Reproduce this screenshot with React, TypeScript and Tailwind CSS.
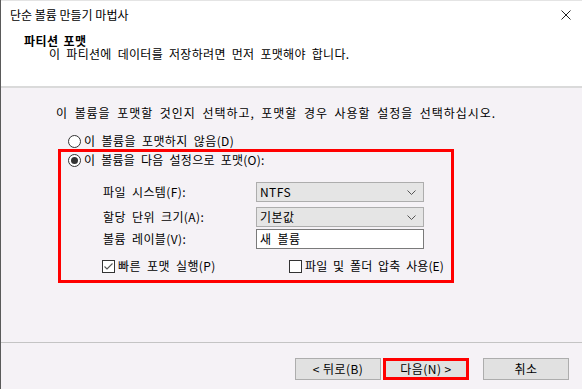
import React from "react";

const font = "font-['Noto_Sans_CJK_KR','Noto_Sans',sans-serif]";

function Radio({ checked }: { checked?: boolean }) {
  return (
    <span className="w-[13px] h-[13px] rounded-full border border-[#333] bg-white flex items-center justify-center shrink-0">
      {checked && <span className="w-[7px] h-[7px] rounded-full bg-[#333]" />}
    </span>
  );
}

function Check({ checked }: { checked?: boolean }) {
  return (
    <span className="w-[13px] h-[13px] border border-[#333] bg-white flex items-center justify-center shrink-0">
      {checked && (
        <svg width="11" height="11" viewBox="0 0 11 11">
          <path d="M1.5 5.5 L4 8 L9.5 2.5" fill="none" stroke="#555" strokeWidth="1.1" />
        </svg>
      )}
    </span>
  );
}

function Chevron() {
  return (
    <svg width="9" height="5" viewBox="0 0 9 5">
      <path d="M0.5 0.5 L4.5 4.5 L8.5 0.5" fill="none" stroke="#555" strokeWidth="1" />
    </svg>
  );
}

export default function App() {
  return (
    <div className={`w-[582px] h-[389px] flex flex-col text-[12px] text-black ${font} border-l border-[#5a5a5a] overflow-hidden`}>
      <div className="h-[88px] shrink-0 bg-white border-b-2 border-[#dadada] border-t border-t-[#e4e4e4] flex flex-col">
        <div className="flex justify-between items-start pl-[9px] pr-[11px] pt-[6px]">
          <span className="leading-[16px]">단순 볼륨 만들기 마법사</span>
          <svg width="10" height="10" viewBox="0 0 10 10" className="mt-[3px]">
            <path d="M0.5 0.5 L9.5 9.5 M9.5 0.5 L0.5 9.5" stroke="#222" strokeWidth="1" />
          </svg>
        </div>
        <div className="pl-[23px] mt-[11px] font-bold leading-[13px] tracking-[0.4px] [word-spacing:2px]">파티션 포맷</div>
        <div className="pl-[48px] leading-[13px] tracking-[0.3px] [word-spacing:3px]">이 파티션에 데이터를 저장하려면 먼저 포맷해야 합니다.</div>
      </div>

      <div className="flex-1 bg-[#f5f2f6] flex flex-col tracking-[0.4px] [word-spacing:3px]">
        <div className="ml-[55px] mt-[17px] leading-[16px] whitespace-nowrap tracking-[0.95px]">
          이 볼륨을 포맷할 것인지 선택하고, 포맷할 경우 사용할 설정을 선택하십시오.
        </div>
        <div className="ml-[67px] mt-[12px] h-[16px] flex items-center gap-[3px]">
          <Radio />
          <span>이 볼륨을 포맷하지 않음(D)</span>
        </div>
        <div className="ml-[57px] w-[396px] h-[134px] border-[3px] border-[#ff0000] pl-[7px] flex flex-col">
          <div className="h-[16px] flex items-center gap-[3px]">
            <Radio checked />
            <span className="tracking-[0.25px]">이 볼륨을 다음 설정으로 포맷(O):</span>
          </div>
          <div className="ml-[35px] mt-[14px] grid grid-cols-[153px_168px] items-center">
            <span className="h-[20px] flex items-center">파일 시스템(F):</span>
            <div className="h-[20px] bg-[#e5e5e5] border border-[#adadad] flex items-center justify-between pl-[3px] pr-[7px]">
              <span>NTFS</span>
              <Chevron />
            </div>
            <span className="mt-[5px] h-[20px] flex items-center">할당 단위 크기(A):</span>
            <div className="mt-[5px] h-[20px] bg-[#e5e5e5] border border-[#adadad] flex items-center justify-between pl-[3px] pr-[7px]">
              <span>기본값</span>
              <Chevron />
            </div>
            <span className="mt-[2px] h-[20px] flex items-center">볼륨 레이블(V):</span>
            <div className="mt-[2px] h-[20px] bg-white border border-[#7a7a7a] flex items-center pl-[3px]">
              <span>새 볼륨</span>
            </div>
          </div>
          <div className="ml-[34px] mt-[9px] h-[16px] flex items-center">
            <div className="w-[187px] flex items-center gap-[3px]">
              <Check checked />
              <span>빠른 포맷 실행(P)</span>
            </div>
            <div className="flex items-center gap-[3px] whitespace-nowrap">
              <Check />
              <span className="tracking-[0.1px]">파일 및 폴더 압축 사용(E)</span>
            </div>
          </div>
        </div>
      </div>

      <div className="h-[47px] shrink-0 bg-[#f5f2f6] border-t border-[#c4c4c4] flex items-start pt-[15px] pl-[294px] tracking-[0.45px] [word-spacing:3px]">
        <button className="w-[86px] h-[22px] bg-[#e1e1e1] border border-[#adadad] flex items-center justify-center">
          &lt; 뒤로(B)
        </button>
        <button className="ml-[2px] w-[86px] h-[22px] bg-[#e1e1e1] border-[3px] border-[#ff0000] flex items-center justify-center">
          다음(N) &gt;
        </button>
        <button className="ml-[14px] w-[86px] h-[22px] bg-[#e1e1e1] border border-[#adadad] flex items-center justify-center">
          취소
        </button>
      </div>
    </div>
  );
}
